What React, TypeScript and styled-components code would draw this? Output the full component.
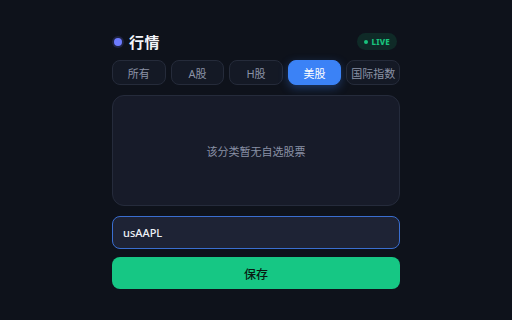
import React, { useState } from 'react';
import styled, { createGlobalStyle } from 'styled-components';

const GlobalStyle = createGlobalStyle`
      html, body {
            margin: 0;
            padding: 0;
            background: #0e121b;
      }
      body {
            font-family: 'Noto Sans', 'Noto Sans CJK SC', sans-serif;
      }
`;

const tabs = ['所有', 'A股', 'H股', '美股', '国际指数'];

const App: React.FC = () => {
      const [active, setActive] = useState('美股');
      const [code, setCode] = useState('usAAPL');

      return (
            <>
                  <GlobalStyle />
                  <Page>
                        <Card>
                              <Header>
                                    <TitleWrap>
                                          <Dot />
                                          <Title>行情</Title>
                                    </TitleWrap>
                                    <LiveBadge>
                                          <LiveDot />
                                          LIVE
                                    </LiveBadge>
                              </Header>
                              <TabRow>
                                    {tabs.map((t) => (
                                          <Tab key={t} $active={t === active} onClick={() => setActive(t)}>
                                                {t}
                                          </Tab>
                                    ))}
                              </TabRow>
                              <EmptyPanel>该分类暂无自选股票</EmptyPanel>
                              <CodeInput value={code} onChange={(e) => setCode(e.target.value)} />
                              <SaveButton>保存</SaveButton>
                        </Card>
                  </Page>
            </>
      );
};

export default App;

const Page = styled.div`
      display: flex;
      justify-content: center;
      align-items: center;
      width: 100vw;
      height: 100vh;
      background: #0e121b;
`;

const Card = styled.div`
      width: 288px;
      display: flex;
      flex-direction: column;
      margin-top: 2px;
`;

const Header = styled.div`
      display: flex;
      align-items: center;
      justify-content: space-between;
      height: 17px;
      margin-bottom: 10px;
`;

const TitleWrap = styled.div`
      display: flex;
      align-items: center;
      gap: 7px;
      padding-left: 2px;
`;

const Dot = styled.span`
      width: 8px;
      height: 8px;
      border-radius: 50%;
      background: #6d7bff;
      box-shadow: 0 0 0 2px rgba(109, 123, 255, 0.18);
`;

const Title = styled.span`
      font-family: 'Noto Sans CJK SC', sans-serif;
      font-size: 15px;
      font-weight: 700;
      color: #f3f5fa;
      letter-spacing: 0.5px;
`;

const LiveBadge = styled.div`
      display: flex;
      align-items: center;
      gap: 4px;
      height: 17px;
      padding: 0 7px;
      border-radius: 9px;
      background: #0f2a27;
      color: #19c37d;
      font-family: 'Noto Sans', sans-serif;
      font-size: 8px;
      font-weight: 800;
      letter-spacing: 0.2px;
      margin-right: 3px;
`;

const LiveDot = styled.span`
      width: 4px;
      height: 4px;
      border-radius: 50%;
      background: #19c37d;
`;

const TabRow = styled.div`
      display: flex;
      gap: 5px;
      margin-bottom: 10px;
`;

const Tab = styled.button<{ $active: boolean }>`
      flex: 1;
      height: 25px;
      padding: 0;
      border-radius: 8px;
      border: 1px solid ${(p) => (p.$active ? '#3b82f6' : '#252b3a')};
      background: ${(p) => (p.$active ? '#3b82f6' : '#141925')};
      color: ${(p) => (p.$active ? '#ffffff' : '#8b93a7')};
      box-shadow: ${(p) => (p.$active ? '0 3px 10px rgba(59, 130, 246, 0.35)' : 'none')};
      font-family: 'Noto Sans', 'Noto Sans CJK SC', sans-serif;
      font-size: 11px;
      white-space: nowrap;
      cursor: pointer;
`;

const EmptyPanel = styled.div`
      height: 111px;
      box-sizing: border-box;
      display: flex;
      align-items: center;
      justify-content: center;
      border-radius: 12px;
      border: 1px solid #252b3b;
      background: #171b29;
      color: #8991a6;
      font-family: 'Noto Sans CJK SC', sans-serif;
      font-size: 11px;
      margin-bottom: 10px;
`;

const CodeInput = styled.input`
      height: 33px;
      box-sizing: border-box;
      border-radius: 8px;
      border: 1px solid #3a6ed0;
      background: #1e2335;
      color: #eef1f7;
      padding: 0 10px;
      font-family: 'Noto Sans', sans-serif;
      font-size: 11px;
      font-weight: 500;
      outline: none;
      margin-bottom: 8px;
`;

const SaveButton = styled.button`
      height: 32px;
      border: none;
      border-radius: 8px;
      background: #16c784;
      color: #0a1a12;
      font-family: 'Noto Sans CJK SC', sans-serif;
      font-size: 12px;
      font-weight: 500;
      cursor: pointer;
`;
